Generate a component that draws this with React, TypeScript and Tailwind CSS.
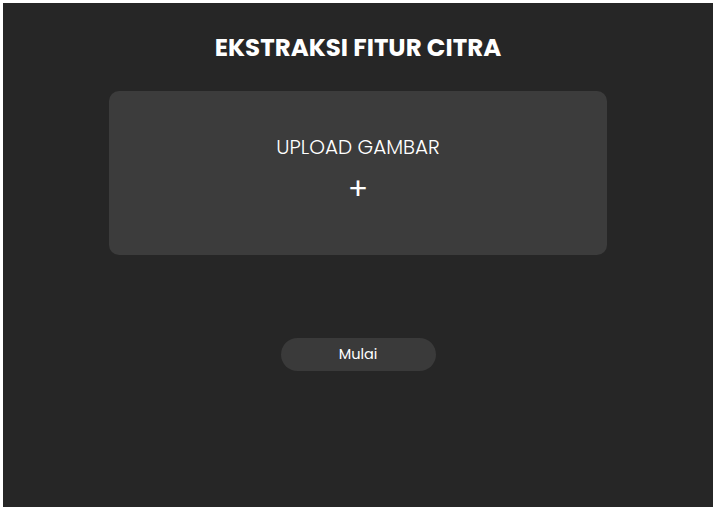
import React from "react";

export default function App() {
  return (
    <div className="w-[716px] h-[510px] bg-white p-[3px]" style={{ fontFamily: "Poppins, Inter, 'Noto Sans', sans-serif" }}>
      <div className="w-full h-full bg-[#262626] flex flex-col items-center">
        <h1 className="mt-[31px] text-[24.5px] leading-[28px] font-bold text-white">EKSTRAKSI FITUR CITRA</h1>
        <div className="mt-[29px] w-[498px] h-[164px] rounded-[10px] bg-[#3c3c3c] flex flex-col items-center">
          <div className="mt-[44px] text-[20px] leading-[24px] font-light text-white">UPLOAD GAMBAR</div>
          <div className="mt-[15px] text-[30px] leading-[30px] font-normal text-white">+</div>
        </div>
        <button className="mt-[83px] w-[155px] h-[33px] rounded-full bg-[#3a3a3a] text-[14.5px] text-white">Mulai</button>
      </div>
    </div>
  );
}
